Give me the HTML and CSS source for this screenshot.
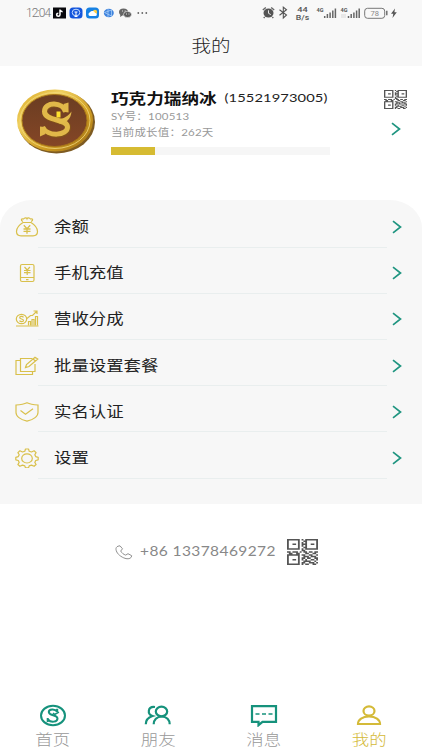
FILE: index.html
```
<!DOCTYPE html>
<html lang="zh-CN">
<head>
    <meta charset="UTF-8">
    <meta name="viewport" content="width=device-width, initial-scale=1.0">
    <title>我的</title>
    <link rel="stylesheet" href="styles.css">
</head>
<body>
    <svg class="defs" width="0" height="0">
        <symbol id="arrow" viewBox="0 0 10 14"><path d="M1 1.2L8.5 7L1 12.8" fill="none" stroke="#1f9580" stroke-width="1.7"/></symbol>
    </svg>

    <header class="header">
        <div class="status">
            <span class="time">12:04</span>
            <svg class="status-left" width="98" height="14" viewBox="0 0 98 14">
                <rect x="0" y="1.500" width="13" height="11" fill="#08080c"/>
                <path d="M7 3.500v5.200a1.700 1.500 0 1 1-1.700-1.500M7 3.700q.7 1.800 2.600 2" fill="none" stroke="#fff" stroke-width="1.500"/>
                <rect x="16.500" y="1.500" width="13" height="11" rx="3.500" fill="#1455dc"/>
                <ellipse cx="23" cy="6.500" rx="3.800" ry="3.300" fill="none" stroke="#c7ddff"/>
                <path d="M23 6v4M21.500 10.500h3M21.500 6h3" stroke="#fff" fill="none"/>
                <rect x="33" y="1.500" width="13" height="11" rx="3.500" fill="#1681e4"/>
                <circle cx="42" cy="6" r="2.200" fill="#ffcf45"/>
                <path d="M37 10a2 1.900 0 0 1 0-3.700a2.700 2.500 0 0 1 5 .7a1.600 1.500 0 0 1 .5 3z" fill="#fff"/>
                <ellipse cx="55.800" cy="7" rx="5" ry="4.200" fill="#3f83dd"/>
                <path d="M51.500 6.500l7-2.500v6z M55 3v8" fill="none" stroke="#a6cdf7" stroke-width=".8"/>
                <ellipse cx="70.500" cy="6" rx="4.500" ry="3.500" fill="#666"/>
                <path d="M67.500 8l-.5 3l2.500-1.500z" fill="#666"/>
                <ellipse cx="74.500" cy="8.500" rx="4" ry="3.100" fill="#5b5b5b" stroke="#f8f8f8" stroke-width=".6"/>
                <path d="M69 5h.9M71.700 5h.9M73 8h.9M75.500 8h.9" stroke="#fff" stroke-width=".9"/>
                <g fill="#666"><circle cx="85.300" cy="7" r=".9"/><circle cx="89.300" cy="7" r=".9"/><circle cx="93.300" cy="7" r=".9"/></g>
            </svg>
            <svg class="status-right" width="136" height="18" viewBox="0 0 136 18">
                <ellipse cx="6.500" cy="9" rx="5" ry="4.500" fill="#555"/>
                <path d="M.8 6l3-2.500M12.200 6l-3-2.500M2.700 13l-1 1M10.300 13l1 1" stroke="#666" stroke-width="1.400"/>
                <path d="M6.500 6.300v3l2.300 1.300" stroke="#f8f8f8" fill="none" stroke-width=".9"/>
                <path d="M17.500 5.700l7 5.300l-3.200 2.900V3.100l3.200 2.700l-7 5.400" fill="none" stroke="#555" stroke-width="1.100"/>
                <text class="net" x="40.500" y="7.600" textLength="10.500" lengthAdjust="spacingAndGlyphs" text-anchor="middle">44</text>
                <text class="net" x="40.500" y="15.800" textLength="13.500" lengthAdjust="spacingAndGlyphs" text-anchor="middle">B/s</text>
                <text class="sim" x="54.500" y="7.600" textLength="7" lengthAdjust="spacingAndGlyphs">4G</text>
                <path d="M62.700 14v-2M65.400 14v-4M68.100 14v-5.500M70.800 14v-7.500M73.400 14V4.500" stroke="#666" stroke-width="1.500"/>
                <text class="sim" x="78.500" y="7.600" textLength="7" lengthAdjust="spacingAndGlyphs">4G</text>
                <path d="M79 11h5M79 13h5" stroke="#ccc" stroke-width=".7"/>
                <path d="M86.500 14v-2M89.200 14v-4M91.900 14v-5.500M94.600 14v-7.500M97.200 14V4.500" stroke="#666" stroke-width="1.500"/>
                <rect x="102.700" y="4.300" width="20" height="10" rx="2.800" fill="none" stroke="#777"/>
                <path d="M124.800 6.800v4.500" stroke="#666" stroke-width="1.400"/>
                <text class="level" x="112.800" y="12" text-anchor="middle">78</text>
                <path d="M133 4.500l-4 5.300h2.300l-.8 4.200l4.300-5.700h-2.400z" fill="#555"/>
            </svg>
        </div>
        <h1>我的</h1>
    </header>

    <section class="profile">
        <svg class="avatar" width="80" height="66" viewBox="0 0 80 66">
            <defs>
                <linearGradient id="gold" x1="0" y1="0" x2="1" y2="1">
                    <stop offset="0" stop-color="#d6a51f"/>
                    <stop offset=".3" stop-color="#f0d060"/>
                    <stop offset=".65" stop-color="#cf9c22"/>
                    <stop offset="1" stop-color="#9a6a14"/>
                </linearGradient>
                <linearGradient id="brown" x1="0" y1="0" x2="0" y2="1">
                    <stop offset="0" stop-color="#6a3d22"/>
                    <stop offset="1" stop-color="#854626"/>
                </linearGradient>
            </defs>
            <ellipse cx="40.500" cy="33" rx="38.500" ry="31.500" fill="#7e5b22"/>
            <ellipse cx="39" cy="31.500" rx="38" ry="31" fill="url(#gold)"/>
            <ellipse cx="39" cy="31.500" rx="35" ry="28" fill="none" stroke="#f3da7c" stroke-width=".8"/>
            <ellipse cx="38.500" cy="31.500" rx="32.500" ry="26" fill="url(#brown)" stroke="#a67418"/>
            <path d="M50.500 23.500C48 12.500 29 13 29 23c0 10 23 7 23 15.500c0 9.500-20 10.500-25 0" fill="none" stroke="#80511b" stroke-width="6"/>
            <path d="M49.500 23C47 12.500 28.500 12.500 28.500 22.500c0 10 23 7 23 15.500c0 9-20 10-25 0" fill="none" stroke="#e1b849" stroke-width="5"/>
            <path d="M47.500 15l5-1.500v10l-3-.5zM24 37.500l4 .5l1.500 7l-5.500 2.500z" fill="#e1b849"/>
            <path d="M38 29.500c7 2 13-1 17.500-7c-.5 8-6 12-12 12z" fill="#e3bb4b"/>
            <path d="M40.500 22.500h4v6h-4z" fill="#ffe12e"/>
        </svg>
        <div class="info">
            <div class="name"><b>巧克力瑞纳冰</b><span class="phone">(15521973005)</span></div>
            <div class="meta">SY号：100513</div>
            <div class="meta">当前成长值：262天</div>
            <div class="progress"><div class="bar"></div></div>
        </div>
        <div class="side">
            <svg class="qr" width="23" height="19" viewBox="0 0 17 17" preserveAspectRatio="none"></svg>
            <svg class="arrow" width="10" height="14"><use href="#arrow"/></svg>
        </div>
    </section>

    <ul class="menu">
        <li>
            <svg class="icon" width="24" height="20" viewBox="0 0 24 20">
                <path d="M8 5.500C4 8 1.500 11 1.500 14.500c0 3 2 4.300 4.500 4.300h12c2.500 0 4.500-1.300 4.500-4.300c0-3.500-2.500-6.500-6.500-9"/>
                <path d="M8 5.500h8M8 4.500C5.500 3.500 6 1.500 8.500 2c1-1.500 3-1.500 3.500-.2c.5-1.300 2.500-1.300 3.500.2c2.500-.5 3 1.500.5 2.500"/>
                <path d="M8.800 8.300l3.200 3.400l3.200-3.400M12 11.700v5M8.500 12h7M8.500 14.300h7" stroke-width="1.300"/>
            </svg>
            <span>余额</span><svg class="arrow" width="10" height="14"><use href="#arrow"/></svg>
        </li>
        <li>
            <svg class="icon" width="24" height="20" viewBox="0 0 24 20">
                <rect x="5.500" y="1.500" width="13.500" height="17" rx="1.500"/>
                <path d="M5.500 14.500H19M11 16.600h2.500"/>
                <path d="M9.500 4l2.700 3l2.700-3M12.200 7v5M9 7.500h6.500M9 9.700h6.500" stroke-width="1.200"/>
            </svg>
            <span>手机充值</span><svg class="arrow" width="10" height="14"><use href="#arrow"/></svg>
        </li>
        <li>
            <svg class="icon" width="24" height="20" viewBox="0 0 24 20">
                <ellipse cx="6.500" cy="10" rx="5.200" ry="4.700"/>
                <path d="M8.500 8.300C7.500 7 4.700 7.200 4.700 8.700c0 1.600 3.800 1 3.800 2.700c0 1.500-3 1.600-4 .2M1 17h22.500"/>
                <path d="M13.500 16.500v-4h2v4M17 16.500V10.500h2v6M20.500 16.500V7.500h2v9" stroke-width="1.200"/>
                <path d="M12 9.500l3.500-3h2l4.500-4.500M18.500 2H22v3"/>
            </svg>
            <span>营收分成</span><svg class="arrow" width="10" height="14"><use href="#arrow"/></svg>
        </li>
        <li>
            <svg class="icon" width="24" height="20" viewBox="0 0 24 20">
                <path d="M17.500 2.500H5.500v13H20V8M5.500 4.500H1v14h16.500v-3"/>
                <path d="M10.500 11.500l1-3l8.500-7.300l2.800 1.800l-8.800 7.500zM18 3l2.500 2"/>
            </svg>
            <span>批量设置套餐</span><svg class="arrow" width="10" height="14"><use href="#arrow"/></svg>
        </li>
        <li>
            <svg class="icon" width="24" height="20" viewBox="0 0 24 20">
                <path d="M12 .8c3 1.500 6.500 2 11 2.200v7.500c0 4-5 7.300-11 8.700c-6-1.400-11-4.700-11-8.700V3C5.500 2.800 9 2.300 12 .8z"/>
                <path d="M5.500 8.500l5 3.800l7.500-5.600"/>
            </svg>
            <span>实名认证</span><svg class="arrow" width="10" height="14"><use href="#arrow"/></svg>
        </li>
        <li>
            <svg class="icon" width="24" height="20" viewBox="0 0 24 20">
                <path d="M9.800 3.200L10.500 1h3l.7 2.200l2.300.8l2.600-1.200l2 1.800l-1.300 2.100l.9 1.900l2.500.7v2.500l-2.500.7l-.9 1.900l1.300 2.100l-2 1.800l-2.600-1.200l-2.300.8l-.7 2h-3l-.7-2l-2.300-.8l-2.600 1.200l-2-1.800l1.300-2.100l-.9-1.900L.8 11.800V9.300l2.500-.7l.9-1.900l-1.300-2.100l2-1.800L7.500 4z" stroke-linejoin="round"/>
                <ellipse cx="12" cy="10.400" rx="5.300" ry="4.600"/>
            </svg>
            <span>设置</span><svg class="arrow" width="10" height="14"><use href="#arrow"/></svg>
        </li>
    </ul>

    <div class="contact">
        <svg width="18" height="15" viewBox="0 0 18 15">
            <path d="M3 1.200L5 .8l2.500 3L5.700 6c1 2 2.800 3.400 5 4.100l2.300-1.400l3.700 2l-.4 1.500c-1.500 2-4.500 2-7.500.7C4.500 11 1.500 8 1 4.500C.8 3 1.500 1.800 3 1.200z" fill="none" stroke="#909090" stroke-width="1"/>
        </svg>
        <span>+86 13378469272</span>
        <svg class="qr" width="31" height="26" viewBox="0 0 17 17" preserveAspectRatio="none"></svg>
    </div>

    <nav class="tabs">
        <a>
            <svg width="28" height="23" viewBox="0 0 28 23">
                <ellipse cx="14" cy="11.500" rx="12" ry="9.700" stroke-width="2"/>
                <path d="M18.200 8V4.800M18.200 7.700C16 4.500 9.800 5 9.800 8c0 4 8.700 2.500 8.700 6.500c0 3.500-6.500 4.500-9.500 1M8.700 14v4" stroke-width="2"/>
                <path d="M14 9l1.500 1.500l4.500-2.300" stroke-width="1.500"/>
            </svg>
            <span>首页</span>
        </a>
        <a>
            <svg width="28" height="23" viewBox="0 0 28 23">
                <ellipse cx="17.500" cy="7.500" rx="5.700" ry="4.800"/>
                <path d="M9.700 20.200c0-4.200 3-7.700 8-7.700s8 3.500 8 7.700M11 3C3.500 2 3 10.500 8.500 12C4 13.500 1.800 16.500 1.800 20.200"/>
            </svg>
            <span>朋友</span>
        </a>
        <a>
            <svg width="28" height="23" viewBox="0 0 28 23">
                <path d="M2 2.200h24v15.600H12.500L8.500 21.200v-3.400H2z"/>
                <path d="M5.500 10h4M12 10h4M18.500 10h4" stroke-width="1.700"/>
            </svg>
            <span>消息</span>
        </a>
        <a class="active">
            <svg width="28" height="23" viewBox="0 0 28 23">
                <ellipse cx="14" cy="7" rx="5.500" ry="4.600"/>
                <path d="M3 20c0-4.500 4.500-7.500 11-7.500s11 3 11 7.500z"/>
            </svg>
            <span>我的</span>
        </a>
    </nav>

    <script>
        const modules = [
            "11111110101111111",
            "10000010011000001",
            "10000010101000001",
            "10011010111001101",
            "10000010101000001",
            "10000010011000001",
            "11111110101111111",
            "00000000110000000",
            "11011101011011011",
            "01100110001100110",
            "11111110110011001",
            "10000010011101110",
            "10000010110110011",
            "10011010101001101",
            "10000010011110010",
            "10000010110011101",
            "11111110101100110"
        ];

        // Build one path out of the dark modules
        let d = "";
        modules.forEach((row, y) => {
            for (let x = 0; x < row.length; x++) {
                if (row[x] === "1") d += `M${x} ${y}h1v1h-1z`;
            }
        });
        document.querySelectorAll(".qr").forEach(svg => {
            svg.innerHTML = `<path d="${d}"/>`;
        });
    </script>
</body>
</html>
```
FILE: styles.css
```
* {
    box-sizing: border-box;
}

body {
    font-family: Lato, "Noto Sans CJK SC", sans-serif;
    margin: 0;
    height: 750px;
    display: flex;
    flex-direction: column;
    background-color: #fff;
    color: #222;
    overflow: hidden;
}

svg {
    display: block;
    flex-shrink: 0;
}

.defs {
    position: absolute;
}

.header {
    height: 66px;
    background-color: #f8f8f8;
}

.status {
    display: flex;
    align-items: center;
    height: 25px;
    padding-left: 26px;
}

.time {
    width: 27px;
    font-family: Roboto, sans-serif;
    font-weight: 300;
    font-size: 12px;
    letter-spacing: -1px;
    color: #777;
    white-space: nowrap;
}

.status-right {
    margin-left: 111px;
}

.status text {
    font-family: Roboto, sans-serif;
    fill: #555;
}

.net {
    font-size: 7px;
    font-weight: 500;
}

.sim {
    font-size: 5.5px;
    font-weight: bold;
}

.status .level {
    font-size: 7.5px;
    fill: #888;
}

h1 {
    margin: 7px 0 0;
    text-align: center;
    font-size: 19.5px;
    line-height: 28px;
    font-weight: 300;
    transform: scaleY(0.85);
}

.profile {
    display: flex;
    height: 134px;
    padding: 23px 15px 0 16px;
}

.info {
    width: 219px;
    margin-left: 15px;
}

.name {
    display: flex;
    align-items: center;
    height: 16px;
    white-space: nowrap;
    transform: scaleY(0.84);
}

.name b {
    font-size: 17.6px;
    color: #111;
}

.phone {
    margin-left: 8px;
    font-size: 14.7px;
    letter-spacing: 0.1px;
}

.meta {
    height: 16px;
    line-height: 16px;
    font-size: 11.5px;
    letter-spacing: 0.2px;
    color: #999;
    white-space: nowrap;
    transform: scaleY(0.86);
}

.name + .meta {
    margin-top: 4px;
}

.progress {
    height: 8px;
    margin-top: 6px;
    background-color: #f6f6f6;
}

.bar {
    width: 20%;
    height: 100%;
    background-color: #d6bb32;
}

.side {
    display: flex;
    flex-direction: column;
    align-items: center;
    gap: 13px;
    margin-left: auto;
    padding-top: 1px;
}

.qr {
    fill: #555;
}

.menu {
    height: 304px;
    margin: 0;
    padding: 1.5px 20px 0 15px;
    list-style: none;
    background-color: #f7f7f7;
    border-radius: 32px 32px 0 0 / 28px 28px 0 0;
}

.menu li {
    display: flex;
    align-items: center;
    height: 46.2px;
    padding-top: 5px;
    background: linear-gradient(#e9eeee, #e9eeee) 23px 100% / 349px 1px no-repeat;
}

.menu span {
    margin-left: 15px;
    font-size: 17.4px;
    line-height: 24px;
    transform: scaleY(0.86);
}

.menu .arrow {
    margin-left: auto;
}

.icon {
    fill: none;
    stroke: #d9c04b;
    stroke-width: 1.2;
}

.contact {
    display: flex;
    align-items: center;
    height: 26px;
    margin: 35px 0 0 115px;
}

.contact span {
    width: 147px;
    margin: 0 0 3px 7px;
    font-size: 15.5px;
    letter-spacing: 0.4px;
    color: #888;
    white-space: nowrap;
    transform: scaleY(0.9);
}

.tabs {
    display: flex;
    margin-top: auto;
    height: 46px;
}

.tabs a {
    flex: 1;
    display: flex;
    flex-direction: column;
    align-items: center;
    color: #999;
}

.tabs svg {
    fill: none;
    stroke: #16927c;
    stroke-width: 2.2;
}

.tabs span {
    font-size: 17.4px;
    font-weight: 300;
    line-height: 25px;
    transform: scaleY(0.86);
}

.tabs .active {
    color: #d4ba38;
}

.tabs .active svg {
    stroke: #d4ba38;
}
```
